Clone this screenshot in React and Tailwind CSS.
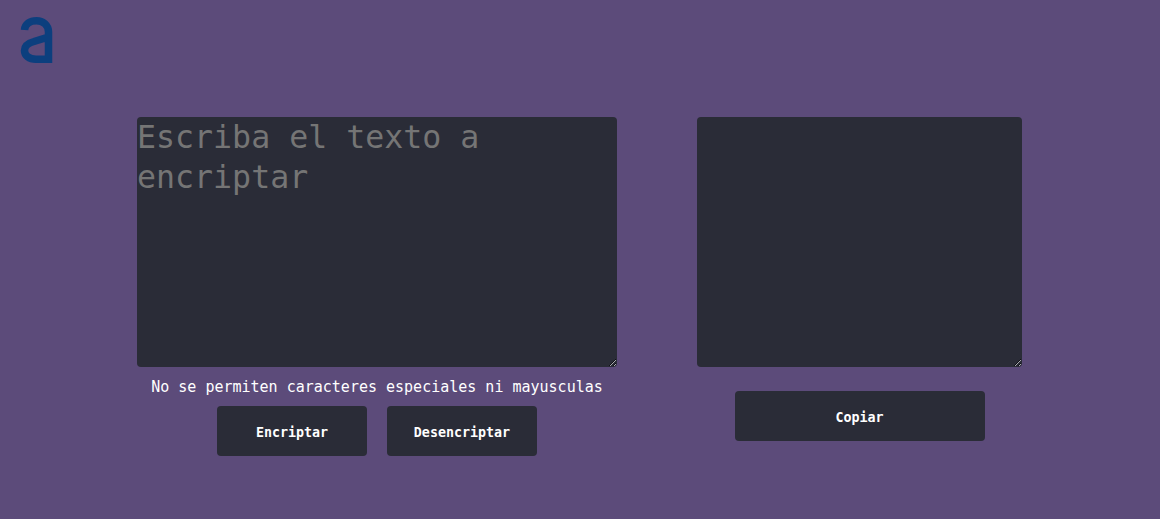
export default function App() {
  return (
    <div className="min-h-[519px] bg-[#5c4b7a] font-['DejaVu_Sans_Mono',monospace]">
      {/* Logo */}
      <header className="pl-5 pt-[17px] h-[117px]">
        <svg width="33" height="47" viewBox="20 17 33 47" fill="none" stroke="#0c3f7e" strokeWidth="7.5">
          <path d="M24.5 30 C25 24 30 20.8 36.5 20.8 C43 20.8 48.5 25 48.5 32 V59.3 H36 C29 59.3 24.5 55.5 24.5 50.5 C24.5 45 28.5 43 34 41.5 L48.5 37" />
        </svg>
      </header>

      <main className="flex justify-center gap-20 pr-px">
        <section className="flex flex-col items-center">
          <textarea
            placeholder="Escriba el texto a encriptar"
            className="w-[480px] h-[250px] block rounded bg-[#2a2c37] text-[31.6px] leading-10 text-white placeholder:text-[#757575] outline-none"
          />
          <p className="mt-3 text-[15px] leading-[17px] text-white">No se permiten caracteres especiales ni mayusculas</p>
          <div className="mt-2.5 flex gap-5">
            <button className="w-[150px] h-[50px] pt-1 rounded bg-[#2a2c37] text-[13.33px] font-bold text-white">Encriptar</button>
            <button className="w-[150px] h-[50px] pt-1 rounded bg-[#2a2c37] text-[13.33px] font-bold text-white">Desencriptar</button>
          </div>
        </section>

        <section className="flex flex-col items-center">
          <textarea className="w-[325px] h-[250px] block rounded bg-[#2a2c37] text-[31.6px] leading-10 text-white outline-none" />
          <button className="mt-6 w-[250px] h-[50px] pt-1 rounded bg-[#2a2c37] text-[13.33px] font-bold text-white">Copiar</button>
        </section>
      </main>
    </div>
  );
}
